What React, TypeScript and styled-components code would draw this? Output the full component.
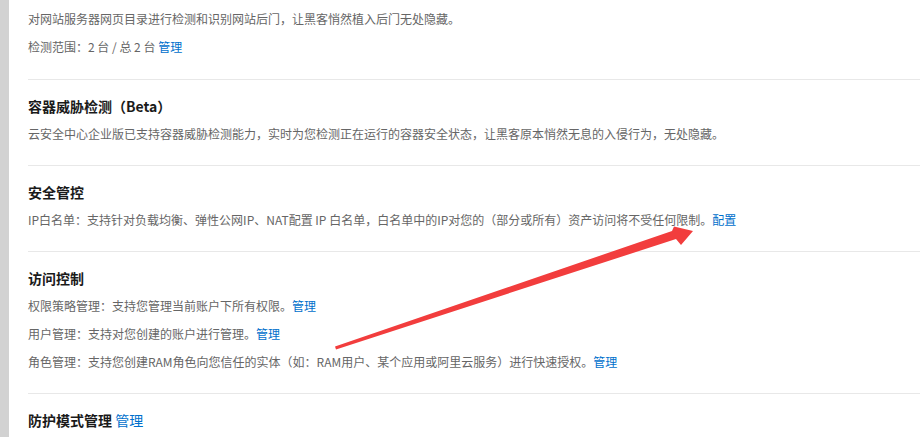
import styled, { createGlobalStyle } from 'styled-components';

const GlobalStyle = createGlobalStyle`
  html, body {
    margin: 0;
    padding: 0;
    background: #fff;
    overflow: hidden;
  }
  body {
    font-family: "Noto Sans CJK SC", "Noto Sans", sans-serif;
  }
`;

export default function App() {
  return (
    <>
      <GlobalStyle />
      <Page>
        <SideBar />
        <Content>
          <Section $top>
            <Line>对网站服务器网页目录进行检测和识别网站后门，让黑客悄然植入后门无处隐藏。</Line>
            <Line>检测范围：2 台 / 总 2 台 <Link>管理</Link></Line>
          </Section>
          <Section>
            <Title>容器威胁检测（Beta）</Title>
            <Line>云安全中心企业版已支持容器威胁检测能力，实时为您检测正在运行的容器安全状态，让黑客原本悄然无息的入侵行为，无处隐藏。</Line>
          </Section>
          <Section>
            <Title>安全管控</Title>
            <Line>IP白名单：支持针对负载均衡、弹性公网IP、NAT配置 IP 白名单，白名单中的IP对您的（部分或所有）资产访问将不受任何限制。<Link>配置</Link></Line>
          </Section>
          <Section>
            <Title>访问控制</Title>
            <Line>权限策略管理：支持您管理当前账户下所有权限。<Link>管理</Link></Line>
            <Line>用户管理：支持对您创建的账户进行管理。<Link>管理</Link></Line>
            <Line>角色管理：支持您创建RAM角色向您信任的实体（如：RAM用户、某个应用或阿里云服务）进行快速授权。<Link>管理</Link></Line>
          </Section>
          <Section $last>
            <Title>防护模式管理 <Link>管理</Link></Title>
          </Section>
        </Content>
        <Arrow viewBox="0 0 920 437" width="920" height="437">
          <polygon
            points="335,346.5 672,231 674,226.5 693,231 681,245 676,239 336,349.5"
            fill="#f23d3d"
          />
        </Arrow>
      </Page>
    </>
  );
}

const Page = styled.div`
  position: relative;
  display: flex;
  width: 920px;
  height: 437px;
  overflow: hidden;
`;

const SideBar = styled.div`
  width: 9px;
  flex: none;
  background: #d2d2d2;
`;

const Content = styled.div`
  flex: 1;
  padding-left: 19px;
`;

const Section = styled.div<{ $top?: boolean; $last?: boolean }>`
  padding: ${p => (p.$top ? '5px 0 18px' : '12px 0 17px')};
  border-bottom: ${p => (p.$last ? 'none' : '1px solid #e8e8e8')};
`;

const Title = styled.div`
  font-size: 14px;
  line-height: 28px;
  font-weight: bold;
  color: #1a1a1a;
`;

const Line = styled.div`
  font-size: 12px;
  line-height: 28px;
  color: #666;
  white-space: nowrap;
`;

const Link = styled.a`
  color: #0070cc;
  font-weight: normal;
  cursor: pointer;
  text-decoration: none;
`;

const Arrow = styled.svg`
  position: absolute;
  left: 0;
  top: 0;
  pointer-events: none;
`;
